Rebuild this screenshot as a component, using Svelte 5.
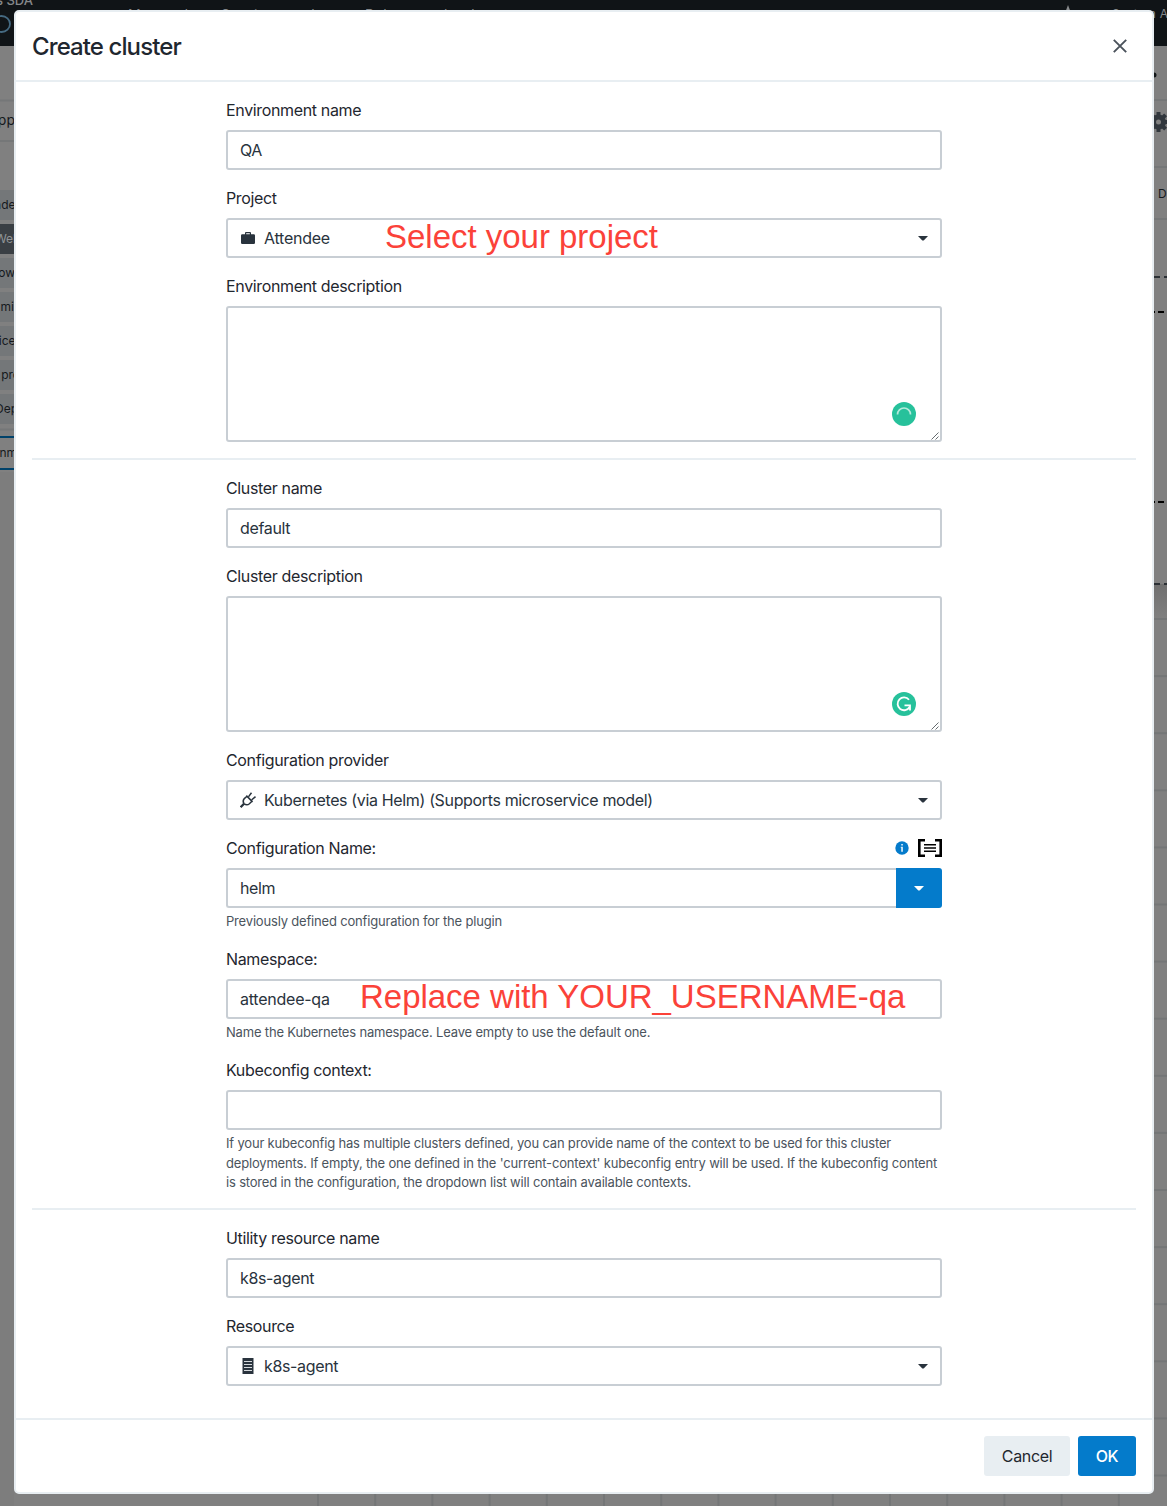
<script>
  const side = [
    { t: 'nde', x: 15.5, y: 190 },
    { t: 'Wel', x: 16, y: 224, on: true },
    { t: 'ow', x: 15, y: 258 },
    { t: 'mi', x: 14, y: 292 },
    { t: 'ice', x: 15.5, y: 326 },
    { t: 'pro', x: 20, y: 360 },
    { t: 'Dep', x: 18, y: 394 }
  ];
  const nav = [
    { t: 'Managed', x: 128, w: 60 },
    { t: 'Service catalog', x: 221, w: 112 },
    { t: 'Release calendar', x: 365, w: 124 }
  ];
  const rows = Array.from({ length: 16 }, (_, i) => 619 + i * 57.1);
  const cols = Array.from({ length: 15 }, (_, i) => 318 + i * 57.2);
  const dashes = [
    { y: 277, a: 1154, b: 1160, c: 1164, d: 1167, dark: false },
    { y: 312, a: 1154, b: 1155, c: 1158, d: 1164, dark: true },
    { y: 502, a: 1154, b: 1155, c: 1158, d: 1164, dark: true },
    { y: 584, a: 1154, b: 1160, c: 1164, d: 1167, dark: false }
  ];
  const teeth = [0, 45, 90, 135, 180, 225, 270, 315];
</script>

{#snippet caret()}
  <svg class="caret" width="10" height="5" viewBox="0 0 10 5"><path d="M0 0h10L6.2 4Q5 5 3.8 4Z" fill="currentColor" /></svg>
{/snippet}

{#snippet grip()}
  <svg class="grip" width="8" height="8" viewBox="0 0 8 8"><path d="M.5 7.5l7-7M4.5 7.5l3-3" stroke="#555b60" fill="none" stroke-width=".9" /></svg>
{/snippet}

<div class="page">
  <svg class="backdrop" width="1167" height="1506" viewBox="0 0 1167 1506">
    <defs>
      <linearGradient id="fade" x1="0" y1="0" x2="0" y2="1">
        <stop offset="0" stop-color="#6f6f6f" /><stop offset="1" stop-color="#808080" />
      </linearGradient>
    </defs>
    <rect width="1167" height="1506" fill="#808080" />
    <rect y="472" width="14" height="1034" fill="#7d7d7d" />
    <rect x="1154" y="584" width="13" height="35" fill="url(#fade)" />
    {#each rows as y}<path d="M1154 {y}h13" stroke="#747677" stroke-width="2" />{/each}
    {#each cols as x}<path d="M{x} 1494v12" stroke="#747677" stroke-width="2" />{/each}
    <path d="M0 100.500h14M0 141h14M0 429.500h14M1154 100h13M1154 167h13M1154 219h13" stroke="#757778" stroke-width="2" />
    <rect width="1167" height="46" fill="#101417" />
    <text x="-4" y="5" class="brand">s SDA</text>
    <ellipse cx="1.500" cy="24" rx="8.500" ry="8" fill="none" stroke="#456a82" stroke-width="1.800" />
    {#each nav as n}<text x={n.x} y="19.500" class="nav" textLength={n.w}>{n.t}</text>{/each}
    <path d="M1063.500 17l4.500-12 4.500 12z" fill="#888b8d" />
    <text x="1112" y="18" class="user" textLength="56">System A</text>
    {#each side as s}
      <rect y={s.y} width="14" height="30" fill={s.on ? '#3a3f44' : '#747779'} />
      <text x={s.x} y={s.y + 19} text-anchor="end" class="side" class:on={s.on}>{s.t}</text>
    {/each}
    <text x="15" y="125" text-anchor="end" class="tab">App</text>
    <path d="M0 437h14M0 469h14" stroke="#00426a" stroke-width="2" />
    <text x="17" y="457" text-anchor="end" class="side">onm</text>
    <circle cx="1154" cy="75" r="2.500" fill="#101417" />
    <g transform="translate(1158.500 122)" fill="#31373d">
      {#each teeth as a}<rect x="-2" y="-10" width="4" height="5" transform="rotate({a})" />{/each}
      <circle r="7.500" /><circle r="2.500" fill="#808080" />
    </g>
    <text x="1158" y="198" class="side">D</text>
    {#each dashes as d}
      <path d="M{d.a} {d.y}H{d.b}M{d.c} {d.y}H{d.d}" stroke={d.dark ? '#000' : '#2b3035'} stroke-width="2" />
    {/each}
  </svg>

  <div class="dialog">
    <header>
      <h1>Create cluster</h1>
      <svg width="14" height="14" viewBox="0 0 14 14"><path d="M.8.8l12.400 12.400M13.200.8L.8 13.200" stroke="#4a525b" stroke-width="1.900" /></svg>
    </header>

    <main>
      <section>
        <div class="field"><div class="label">Environment name</div><div class="box">QA</div></div>
        <div class="field">
          <div class="label">Project</div>
          <div class="box">
            <svg class="icon" width="16" height="16" viewBox="0 0 16 16"><path fill="#29333d" d="M2.200 4.300H5V2.900Q5 2 6 2h4q1 0 1 .9v1.400h2.800q1.200 0 1.200 1.200v7.300q0 1.200-1.200 1.200H2.200Q1 14 1 12.800V5.500q0-1.200 1.200-1.200zM6.200 4.300h3.600V3.200H6.200z" /></svg>
            <span class="short">Attendee</span>{@render caret()}
            <b class="note project">Select your project</b>
          </div>
        </div>
        <div class="field">
          <div class="label">Environment description</div>
          <div class="box area">
            <svg class="badge" width="24" height="24" viewBox="0 0 24 24"><circle cx="12" cy="12" r="12" fill="#27c19b" /><path d="M5.500 12.500a6.500 6.500 0 0 1 13 0" fill="none" stroke="#b5eadc" stroke-width="1.700" /></svg>
            {@render grip()}
          </div>
        </div>
      </section>
      <section>
        <div class="field"><div class="label">Cluster name</div><div class="box">default</div></div>
        <div class="field">
          <div class="label">Cluster description</div>
          <div class="box area">
            <svg class="badge" width="24" height="24" viewBox="0 0 24 24"><circle cx="12" cy="12" r="12" fill="#27c19b" /><path d="M17 7.800A6.400 6.400 0 1 0 17.600 15M12.500 13.300H18V18.500" fill="none" stroke="#fff" stroke-width="1.800" /></svg>
            {@render grip()}
          </div>
        </div>
        <div class="field">
          <div class="label">Configuration provider</div>
          <div class="box">
            <svg class="icon" width="16" height="16" viewBox="0 0 16 16" fill="none" stroke="#29333d" stroke-width="1.500"><path d="M.6 15.200l3.400-3.400" stroke-width="2.300" /><path d="M6.300 3.600l6.300 6.300M7 4.300L4.300 6.600Q2.200 9 4 11.800 7 13.800 9.400 11.700L11.900 9.200M8.600 4.600L11.500.8M11.800 7.800l3.700-3.200" /></svg>
            <span>Kubernetes (via Helm) (Supports microservice model)</span>{@render caret()}
          </div>
        </div>
        <div class="field">
          <div class="label">
            <span>Configuration Name:</span>
            <span class="tools">
              <svg width="14" height="14" viewBox="0 0 14 14"><circle cx="7" cy="7" r="6.700" fill="#047bcb" /><path d="M6.200 3h1.700v1.600H6.200zM5.800 5.800h2.100v5H6.200V7h-.4z" fill="#d7ebf8" /></svg>
              <svg width="24" height="18" viewBox="0 0 24 18"><path d="M7 1.200H1.300v15.600H7M17 1.200h5.700v15.600H17" fill="none" stroke="#000" stroke-width="2.600" /><path d="M6 5.700h12M6 9h12M6 12.300h12" stroke="#000" stroke-width="1.500" /></svg>
            </span>
          </div>
          <div class="combo"><div class="box">helm</div><button aria-label="Open list">{@render caret()}</button></div>
          <p>Previously defined configuration for the plugin</p>
        </div>
        <div class="field">
          <div class="label">Namespace:</div>
          <div class="box short">attendee-qa<b class="note namespace">Replace with YOUR_USERNAME-qa</b></div>
          <p>Name the Kubernetes namespace. Leave empty to use the default one.</p>
        </div>
        <div class="field">
          <div class="label">Kubeconfig context:</div>
          <div class="box"></div>
          <p class="long">If your kubeconfig has multiple clusters defined, you can provide name of the context to be used for this cluster<br />deployments. If empty, the one defined in the 'current-context' kubeconfig entry will be used. If the kubeconfig content<br />is stored in the configuration, the dropdown list will contain available contexts.</p>
        </div>
      </section>
      <section>
        <div class="field"><div class="label">Utility resource name</div><div class="box">k8s-agent</div></div>
        <div class="field">
          <div class="label">Resource</div>
          <div class="box">
            <svg class="icon" width="16" height="16" viewBox="0 0 16 16"><path d="M2.500 0h11v16h-11z" fill="#29333d" /><path d="M4 3.500h8M4 6.500h8M4 9.500h8M4 12.500h8" stroke="#d5d9dc" stroke-width="1.200" /></svg>
            <span>k8s-agent</span>{@render caret()}
          </div>
        </div>
      </section>
    </main>

    <footer><button class="cancel">Cancel</button><button class="ok">OK</button></footer>
  </div>
</div>

<style>
  :global(body) { overflow: hidden; }
  .page {
    position: relative;
    box-sizing: border-box;
    width: 1167px;
    height: 1506px;
    padding: 10px 13px 12px 14px;
    overflow: hidden;
    font: 16px/24px Inter, 'Liberation Sans', sans-serif;
    letter-spacing: -0.35px;
    color: #1f272f;
  }
  .backdrop { position: absolute; inset: 0; letter-spacing: 0; }
  .brand { font-size: 13px; font-weight: 500; fill: #85888a; }
  .nav { font-size: 14px; fill: #85888a; }
  .user { font-size: 12px; fill: #85888a; }
  .side { font-size: 12px; fill: #15191d; }
  .side.on { fill: #909496; }
  .tab { font-size: 14px; fill: #15191d; }
  .dialog {
    position: relative;
    box-sizing: border-box;
    display: flex;
    flex-direction: column;
    height: 1484px;
    border: 2px solid #e8eef2;
    border-radius: 5px;
    background: #fff;
  }
  header {
    display: flex;
    align-items: center;
    justify-content: space-between;
    box-sizing: border-box;
    height: 70px;
    padding: 0 25px 0 16px;
    border-bottom: 2px solid #e8eef2;
  }
  h1 { margin: 0; padding-top: 2px; font-size: 24px; line-height: 32px; font-weight: 500; letter-spacing: -0.9px; }
  main { flex: 1; padding: 0 16px; }
  section {
    display: flex;
    flex-direction: column;
    gap: 16px;
    padding: 16px 194px;
    border-bottom: 2px solid #e8eef2;
  }
  section:last-child { border: 0; }
  .label { display: flex; align-items: center; justify-content: space-between; height: 24px; margin-bottom: 8px; }
  .tools { display: flex; align-items: center; gap: 9px; }
  .box {
    position: relative;
    box-sizing: border-box;
    display: flex;
    align-items: center;
    width: 716px;
    height: 40px;
    padding: 0 12px;
    border: 2px solid #c8ced4;
    border-radius: 3px;
    background: #fff;
    color: #29333d;
  }
  .box.area { height: 136px; }
  .short { letter-spacing: -0.24px; }
  .icon { margin-right: 8px; flex: none; }
  .box > :global(.caret) { margin-left: auto; }
  .badge { position: absolute; right: 24px; bottom: 14px; }
  .grip { position: absolute; right: 1px; bottom: 0; }
  .note {
    position: absolute;
    font: 400 33px/36px 'Liberation Sans', Arial, sans-serif;
    letter-spacing: -0.02px;
    color: #fb4239;
    white-space: nowrap;
  }
  .project { left: 157px; top: -1px; }
  .namespace { left: 132px; top: -2px; }
  .combo { display: flex; }
  .combo .box { width: 670px; border-right: 0; border-radius: 3px 0 0 3px; }
  button {
    display: flex;
    align-items: center;
    justify-content: center;
    height: 40px;
    padding: 0;
    border: 0;
    font: inherit;
    letter-spacing: inherit;
    border-radius: 3px;
  }
  .combo button { width: 46px; background: #047bcb; color: #fff; border-radius: 0 3px 3px 0; }
  p {
    margin: 0;
    padding-top: 4px;
    height: 19px;
    font-size: 13px;
    line-height: 19.5px;
    letter-spacing: -0.18px;
    color: #4b545d;
    white-space: nowrap;
  }
  p.long { height: 58px; }
  footer {
    display: flex;
    gap: 8px;
    justify-content: flex-end;
    box-sizing: border-box;
    height: 74px;
    padding: 16px;
    border-top: 2px solid #e8eef2;
  }
  .cancel { width: 86px; background: #e8eef2; color: #1f272f; }
  .ok { width: 58px; background: #047bcb; color: #fff; font-weight: 500; }
</style>
